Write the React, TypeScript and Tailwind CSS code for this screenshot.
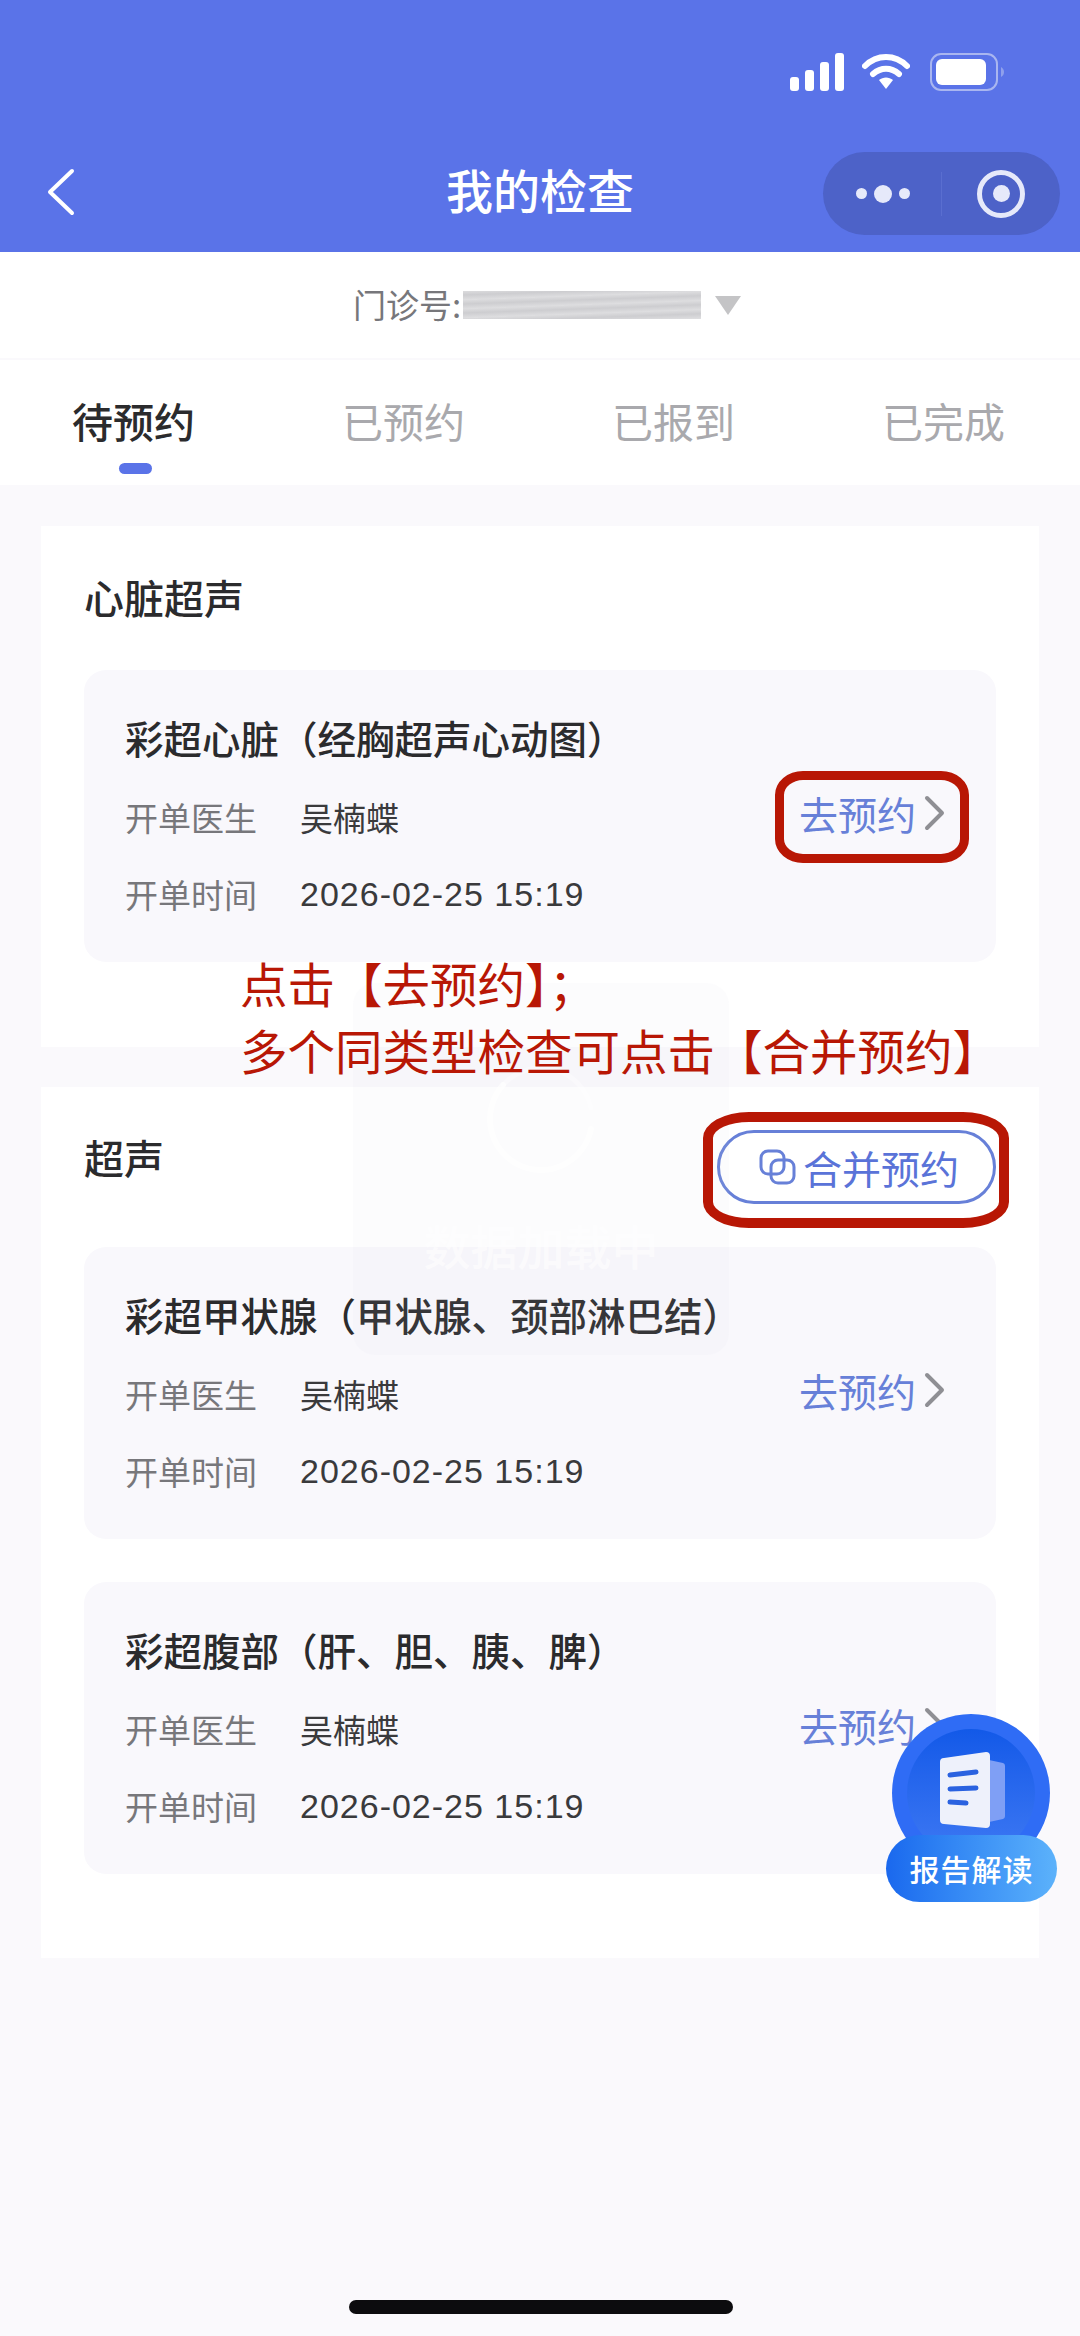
const CJK = "font-['Noto_Sans_CJK_SC','Liberation_Sans',sans-serif]";

const tabs = ["待预约", "已预约", "已报到", "已完成"];

const BookLink = () => (
  <div className="flex items-center">
    <span className="text-[39px] leading-[50px] text-[#6780d8]">去预约</span>
    <svg width="22" height="36" viewBox="0 0 22 36" fill="none" className="ml-[8px]">
      <path d="M3 3l15 15L3 33" stroke="#8f8f94" strokeWidth="4" strokeLinecap="round" strokeLinejoin="round" />
    </svg>
  </div>
);

const ExamCard = ({ title }: { title: string }) => (
  <div className="relative h-[292px] rounded-[22px] bg-[#f9f8fc] pl-[41px] pr-[50px] pt-[41px]">
    <div className="text-[38.500px] leading-[52px] font-medium text-[#2b2b2d]">{title}</div>
    <div className="flex items-center justify-between">
      <div>
        <div className="mt-[15px] flex h-[77px] items-center text-[33px] leading-[44px]">
          <span className="w-[175px] text-[#77777b]">开单医生</span>
          <span className="text-[#3a3a3c]">吴楠蝶</span>
        </div>
        <div className="flex h-[77px] items-center text-[33px] leading-[44px]">
          <span className="w-[175px] text-[#77777b]">开单时间</span>
          <span className="font-['Liberation_Sans',sans-serif] text-[34px] tracking-[1px] text-[#3a3a3c]">2026-02-25 15:19</span>
        </div>
      </div>
      <div className="-mt-[70px]">
        <BookLink />
      </div>
    </div>
  </div>
);

const StatusIcons = () => (
  <div className="absolute left-[790px] top-[53px] flex items-center">
    <svg width="54" height="38" viewBox="0 0 54 38" fill="#fff">
      <rect x="0" y="24" width="9" height="14" rx="3" />
      <rect x="15" y="17" width="9" height="21" rx="3" />
      <rect x="30" y="9" width="9" height="29" rx="3" />
      <rect x="45" y="0" width="9" height="38" rx="3" />
    </svg>
    <svg width="48" height="38" viewBox="0 0 48 38" fill="none" className="ml-[18px]">
      <path d="M3 13C15 1 33 1 45 13" stroke="#fff" strokeWidth="6" strokeLinecap="round" />
      <path d="M11 21c8-7 18-7 26 0" stroke="#fff" strokeWidth="6" strokeLinecap="round" />
      <path d="M17 27c4-3.500 10-3.500 14 0L24 36z" fill="#fff" />
    </svg>
    <svg width="74" height="38" viewBox="0 0 74 38" fill="none" className="ml-[20px]">
      <rect x="1" y="1" width="66" height="36" rx="10" stroke="#a9b6f0" strokeWidth="2" />
      <rect x="6" y="6" width="50" height="26" rx="6" fill="#fff" />
      <path d="M71 14c2 1 3 3 3 5s-1 4-3 5z" fill="#8fa0ec" />
    </svg>
  </div>
);

const Capsule = () => (
  <div className="absolute left-[823px] top-[152px] flex h-[83px] w-[237px] items-center rounded-full bg-[#4d62c8]">
    <div className="flex w-[118px] items-center justify-center gap-[7px] pl-[2px]">
      <span className="h-[11px] w-[11px] rounded-full bg-[#e6e9fa]" />
      <span className="h-[18px] w-[18px] rounded-full bg-[#e6e9fa]" />
      <span className="h-[11px] w-[11px] rounded-full bg-[#e6e9fa]" />
    </div>
    <div className="h-[44px] w-px bg-[#5a6ed0]" />
    <div className="ml-[35px] flex h-[48px] w-[48px] items-center justify-center rounded-full border-[5px] border-[#e6e9fa]">
      <span className="h-[17px] w-[17px] rounded-full bg-[#e6e9fa]" />
    </div>
  </div>
);

const ReportFab = () => (
  <div className="absolute left-[886px] top-[1714px] h-[188px] w-[171px]">
    <div className="absolute left-[6px] top-0 flex h-[158px] w-[158px] items-center justify-center rounded-full bg-[#2f6cf5]">
      <div className="h-[128px] w-[128px] rounded-full bg-gradient-to-b from-[#1259e8] to-[#3d78f3]" />
      <svg width="70" height="76" viewBox="0 0 70 76" className="absolute left-[47px] top-[38px]">
        <path d="M50 8l14 3a3 3 0 0 1 2 3v50a3 3 0 0 1-2 3l-14 3z" fill="#7f9ff5" />
        <path d="M5 6L47 0a4 4 0 0 1 4 4v68a4 4 0 0 1-4 4L5 72a4 4 0 0 1-4-4V10a4 4 0 0 1 4-4z" fill="#eef1fb" />
        <path d="M11 23l26-3M11 37l26-1M11 50l16 1" stroke="#2a62e0" strokeWidth="5" strokeLinecap="round" />
      </svg>
    </div>
    <div className="absolute bottom-0 left-0 flex h-[67px] w-[171px] items-center justify-center rounded-full bg-gradient-to-r from-[#1a68ee] to-[#5cb2fb] text-[30px] font-medium tracking-[1px] text-white">
      报告解读
    </div>
  </div>
);

const LoadingToast = () => (
  <div className="absolute left-[353px] top-[983px] flex h-[372px] w-[376px] flex-col items-center rounded-[22px] bg-[#d8d6e0]/[0.07]">
    <svg width="116" height="116" viewBox="0 0 116 116" fill="none" className="mt-[78px]">
      <path d="M108 47A51 51 0 0 0 20 24" stroke="#fff" strokeOpacity="0.35" strokeWidth="5" strokeLinecap="round" />
      <path d="M20 24A51 51 0 1 0 108 68" stroke="#fff" strokeOpacity="0.6" strokeWidth="6" strokeLinecap="round" />
    </svg>
    <div className="mt-[38px] text-[47px] leading-[60px] font-medium text-white/60">数据加载中</div>
  </div>
);

const App = () => {
  return (
    <div className={`relative h-[2336px] w-[1080px] overflow-hidden bg-[#faf9fc] ${CJK}`}>
      <div className="flex h-[252px] items-end justify-center bg-[#5a73e8] pb-[33px]">
        <div className="text-[47px] leading-[60px] font-medium text-white">我的检查</div>
      </div>

      <div className="flex h-[106px] items-center bg-white pl-[353px] text-[33px] text-[#77777b]">
        <span>门诊号:</span>
        <div className="ml-[2px] h-[28px] w-[238px] bg-[repeating-linear-gradient(178deg,#dcdcde_0px,#cdcdd0_4px,#dedee0_9px)] blur-[0.5px]" />
        <svg width="26" height="19" viewBox="0 0 26 19" className="ml-[14px]">
          <path d="M0 0h26L13 19z" fill="#c4c4c6" />
        </svg>
      </div>

      <div className="mt-[2px] h-[125px] bg-white">
        <div className="flex pl-[72px] pt-[32px]">
          {tabs.map((tab, i) => (
            <div key={tab} className="relative mr-[148px] w-[122px] shrink-0">
              <div className={`whitespace-nowrap text-[41px] leading-[56px] ${i === 0 ? "font-medium text-[#2b2b2d]" : "text-[#a9a9ad]"}`}>
                {tab}
              </div>
              {i === 0 && <div className="absolute left-[47px] top-[71px] h-[11px] w-[33px] rounded-full bg-[#5a73e8]" />}
            </div>
          ))}
        </div>
      </div>

      <div className="mx-[41px] mt-[41px] h-[521px] bg-white px-[43px]">
        <div className="flex h-[144px] items-center pb-[2px] text-[40px] font-medium text-[#2b2b2d]">心脏超声</div>
        <ExamCard title="彩超心脏（经胸超声心动图）" />
      </div>

      <div className="mx-[41px] mt-[40px] h-[871px] bg-white px-[43px]">
        <div className="flex h-[160px] items-center justify-between">
          <span className="-mt-[20px] text-[40px] font-medium text-[#2b2b2d]">超声</span>
          <div className="flex h-[74px] w-[279px] items-center rounded-full border-[3px] border-[#6780d8] pl-[39px] text-[39px] text-[#5a73d8]">
            <svg width="37" height="36" viewBox="0 0 37 36" fill="none" stroke="#6780d8" strokeWidth="3">
              <rect x="2" y="2" width="23" height="23" rx="7" />
              <rect x="12" y="11" width="23" height="23" rx="7" />
            </svg>
            <span className="ml-[7px] leading-[50px]">合并预约</span>
          </div>
        </div>
        <div className="flex flex-col gap-[43px]">
          <ExamCard title="彩超甲状腺（甲状腺、颈部淋巴结）" />
          <ExamCard title="彩超腹部（肝、胆、胰、脾）" />
        </div>
      </div>

      <StatusIcons />
      <svg width="30" height="48" viewBox="0 0 30 48" fill="none" className="absolute left-[46px] top-[168px]">
        <path d="M26 3L4 24l22 21" stroke="#fff" strokeWidth="4" strokeLinecap="round" strokeLinejoin="round" />
      </svg>
      <Capsule />
      <LoadingToast />

      <div className="absolute left-[240px] top-[949px] text-[47.500px] leading-[67px] text-[#b81705]">
        <div>点击【去预约】；</div>
        <div>多个同类型检查可点击【合并预约】</div>
      </div>
      <div className="absolute left-[775px] top-[771px] h-[92px] w-[194px] rounded-[28px/24px] border-[9px] border-[#b81705]" />
      <div className="absolute left-[703px] top-[1112px] h-[116px] w-[306px] rounded-[46px/26px] border-[10px] border-[#b81705]" />

      <ReportFab />
      <div className="absolute left-[349px] top-[2300px] h-[14px] w-[384px] rounded-full bg-[#0c0c0e]" />
    </div>
  );
};

export default App;
